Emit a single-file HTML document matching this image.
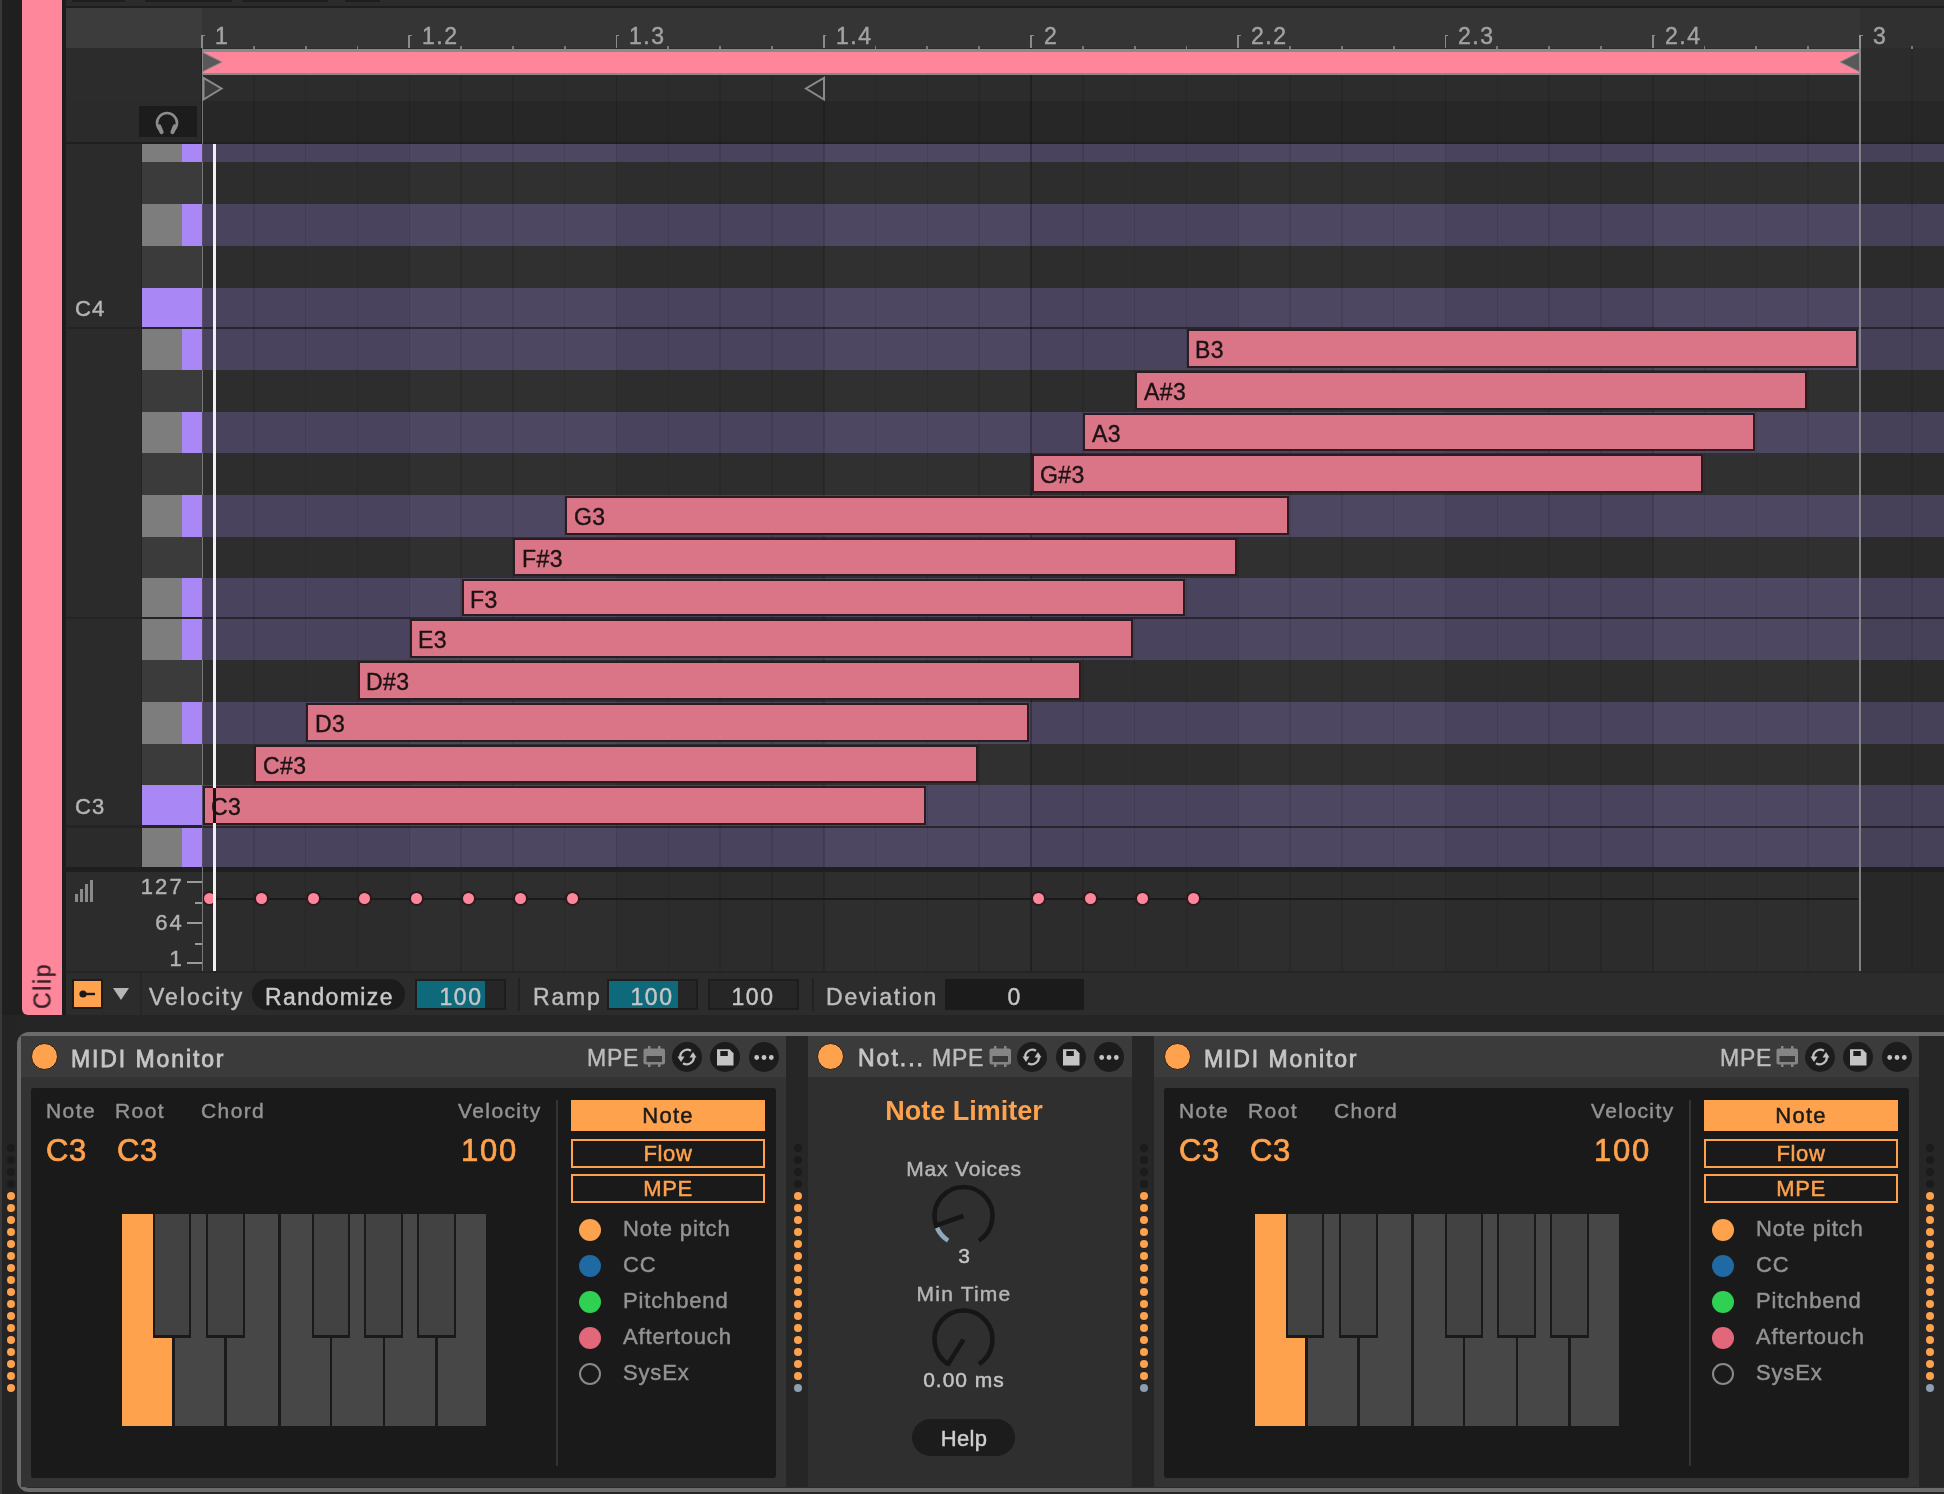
<!DOCTYPE html>
<html><head><meta charset="utf-8"><style>
html,body{margin:0;padding:0;width:1944px;height:1494px;overflow:hidden;background:#222}
body{position:relative;font-family:"Liberation Sans",sans-serif}
body>div,body>svg{position:absolute}
.t{position:absolute;white-space:nowrap;line-height:1;will-change:transform}
.note{position:absolute;box-sizing:border-box;background:#d97586;border:2px solid #2a1c20;overflow:hidden}
.note span{position:absolute;left:6.5px;top:8px;font-size:23px;line-height:1;color:#1c1214;white-space:nowrap;letter-spacing:0.4px;will-change:transform;-webkit-text-stroke:0.4px #1c1214}
</style></head><body>
<div style="left:0.00px;top:0.00px;width:1944.00px;height:1494.00px;background:#222222;"></div>
<div style="left:0.00px;top:0.00px;width:2.00px;height:1494.00px;background:#393939;"></div>
<div style="left:2.00px;top:0.00px;width:20.00px;height:1015.00px;background:#1f1f1f;"></div>
<div style="left:62.00px;top:0.00px;width:4.00px;height:1015.00px;background:#1d1d1d;"></div>
<div style="left:22px;top:0;width:40px;height:1015px;background:#ff879b;border-radius:0 0 0 6px"></div>
<div class="t" style="left:43px;top:985.5px;font-size:23px;color:#3a1f26;-webkit-text-stroke:0.4px #3a1f26;letter-spacing:1.6px;transform:translate(-50%,-50%) rotate(-90deg);white-space:nowrap">Clip</div>
<div style="left:66.00px;top:0.00px;width:1878.00px;height:1015.00px;background:#2b2b2b;"></div>
<div style="left:66.00px;top:0.00px;width:1878.00px;height:6.00px;background:#2b2b2b;"></div>
<div style="left:72.00px;top:0.00px;width:53.00px;height:2.00px;background:#1e1e1e;"></div>
<div style="left:145.00px;top:0.00px;width:87.00px;height:2.00px;background:#1e1e1e;"></div>
<div style="left:242.00px;top:0.00px;width:86.00px;height:2.00px;background:#1e1e1e;"></div>
<div style="left:345.00px;top:0.00px;width:35.00px;height:2.00px;background:#1e1e1e;"></div>
<div style="left:66.00px;top:6.00px;width:1878.00px;height:2.00px;background:#1d1d1d;"></div>
<div style="left:66.00px;top:8.00px;width:136.00px;height:40.00px;background:#3c3c3c;"></div>
<div style="left:202.00px;top:8.00px;width:1658.00px;height:40.00px;background:#353535;"></div>
<div style="left:1860.00px;top:8.00px;width:84.00px;height:40.00px;background:#303030;"></div>
<div style="left:66.00px;top:48.00px;width:1878.00px;height:53.00px;background:#2c2c2c;"></div>
<div style="left:202.00px;top:101.00px;width:1742.00px;height:41.00px;background:#272727;"></div>
<div style="left:66.00px;top:142.00px;width:1878.00px;height:2.00px;background:#1f1f1f;"></div>
<div style="left:202.00px;top:144.00px;width:1742.00px;height:18.00px;background:#4e4762;"></div>
<div style="left:202.00px;top:162.00px;width:1742.00px;height:42.00px;background:#303030;"></div>
<div style="left:202.00px;top:204.00px;width:1742.00px;height:42.00px;background:#4e4762;"></div>
<div style="left:202.00px;top:246.00px;width:1742.00px;height:42.00px;background:#303030;"></div>
<div style="left:202.00px;top:288.00px;width:1742.00px;height:40.00px;background:#4e4762;"></div>
<div style="left:202.00px;top:328.00px;width:1742.00px;height:42.00px;background:#4e4762;"></div>
<div style="left:202.00px;top:370.00px;width:1742.00px;height:41.50px;background:#303030;"></div>
<div style="left:202.00px;top:411.50px;width:1742.00px;height:41.50px;background:#4e4762;"></div>
<div style="left:202.00px;top:453.00px;width:1742.00px;height:41.50px;background:#303030;"></div>
<div style="left:202.00px;top:494.50px;width:1742.00px;height:42.00px;background:#4e4762;"></div>
<div style="left:202.00px;top:536.50px;width:1742.00px;height:41.00px;background:#303030;"></div>
<div style="left:202.00px;top:577.50px;width:1742.00px;height:40.50px;background:#4e4762;"></div>
<div style="left:202.00px;top:618.00px;width:1742.00px;height:42.00px;background:#4e4762;"></div>
<div style="left:202.00px;top:660.00px;width:1742.00px;height:42.00px;background:#303030;"></div>
<div style="left:202.00px;top:702.00px;width:1742.00px;height:41.50px;background:#4e4762;"></div>
<div style="left:202.00px;top:743.50px;width:1742.00px;height:41.50px;background:#303030;"></div>
<div style="left:202.00px;top:785.00px;width:1742.00px;height:41.50px;background:#4e4762;"></div>
<div style="left:202.00px;top:826.50px;width:1742.00px;height:40.50px;background:#4e4762;"></div>
<div style="left:202.00px;top:327.00px;width:1742.00px;height:2.00px;background:#2b2731;"></div>
<div style="left:202.00px;top:617.00px;width:1742.00px;height:2.00px;background:#2b2731;"></div>
<div style="left:202.00px;top:825.50px;width:1742.00px;height:2.00px;background:#2b2731;"></div>
<div style="left:201.25px;top:48.00px;width:1.50px;height:27.00px;background:rgba(0,0,0,0.26);"></div>
<div style="left:253.06px;top:48.00px;width:1.50px;height:27.00px;background:rgba(0,0,0,0.09);"></div>
<div style="left:304.88px;top:48.00px;width:1.50px;height:27.00px;background:rgba(0,0,0,0.09);"></div>
<div style="left:356.69px;top:48.00px;width:1.50px;height:27.00px;background:rgba(0,0,0,0.09);"></div>
<div style="left:408.50px;top:48.00px;width:1.50px;height:27.00px;background:rgba(0,0,0,0.13);"></div>
<div style="left:460.31px;top:48.00px;width:1.50px;height:27.00px;background:rgba(0,0,0,0.09);"></div>
<div style="left:512.12px;top:48.00px;width:1.50px;height:27.00px;background:rgba(0,0,0,0.09);"></div>
<div style="left:563.94px;top:48.00px;width:1.50px;height:27.00px;background:rgba(0,0,0,0.09);"></div>
<div style="left:615.75px;top:48.00px;width:1.50px;height:27.00px;background:rgba(0,0,0,0.13);"></div>
<div style="left:667.56px;top:48.00px;width:1.50px;height:27.00px;background:rgba(0,0,0,0.09);"></div>
<div style="left:719.38px;top:48.00px;width:1.50px;height:27.00px;background:rgba(0,0,0,0.09);"></div>
<div style="left:771.19px;top:48.00px;width:1.50px;height:27.00px;background:rgba(0,0,0,0.09);"></div>
<div style="left:823.00px;top:48.00px;width:1.50px;height:27.00px;background:rgba(0,0,0,0.13);"></div>
<div style="left:874.81px;top:48.00px;width:1.50px;height:27.00px;background:rgba(0,0,0,0.09);"></div>
<div style="left:926.62px;top:48.00px;width:1.50px;height:27.00px;background:rgba(0,0,0,0.09);"></div>
<div style="left:978.44px;top:48.00px;width:1.50px;height:27.00px;background:rgba(0,0,0,0.09);"></div>
<div style="left:1030.25px;top:48.00px;width:1.50px;height:27.00px;background:rgba(0,0,0,0.26);"></div>
<div style="left:1082.06px;top:48.00px;width:1.50px;height:27.00px;background:rgba(0,0,0,0.09);"></div>
<div style="left:1133.88px;top:48.00px;width:1.50px;height:27.00px;background:rgba(0,0,0,0.09);"></div>
<div style="left:1185.69px;top:48.00px;width:1.50px;height:27.00px;background:rgba(0,0,0,0.09);"></div>
<div style="left:1237.50px;top:48.00px;width:1.50px;height:27.00px;background:rgba(0,0,0,0.13);"></div>
<div style="left:1289.31px;top:48.00px;width:1.50px;height:27.00px;background:rgba(0,0,0,0.09);"></div>
<div style="left:1341.12px;top:48.00px;width:1.50px;height:27.00px;background:rgba(0,0,0,0.09);"></div>
<div style="left:1392.94px;top:48.00px;width:1.50px;height:27.00px;background:rgba(0,0,0,0.09);"></div>
<div style="left:1444.75px;top:48.00px;width:1.50px;height:27.00px;background:rgba(0,0,0,0.13);"></div>
<div style="left:1496.56px;top:48.00px;width:1.50px;height:27.00px;background:rgba(0,0,0,0.09);"></div>
<div style="left:1548.38px;top:48.00px;width:1.50px;height:27.00px;background:rgba(0,0,0,0.09);"></div>
<div style="left:1600.19px;top:48.00px;width:1.50px;height:27.00px;background:rgba(0,0,0,0.09);"></div>
<div style="left:1652.00px;top:48.00px;width:1.50px;height:27.00px;background:rgba(0,0,0,0.13);"></div>
<div style="left:1703.81px;top:48.00px;width:1.50px;height:27.00px;background:rgba(0,0,0,0.09);"></div>
<div style="left:1755.62px;top:48.00px;width:1.50px;height:27.00px;background:rgba(0,0,0,0.09);"></div>
<div style="left:1807.44px;top:48.00px;width:1.50px;height:27.00px;background:rgba(0,0,0,0.09);"></div>
<div style="left:1859.25px;top:48.00px;width:1.50px;height:27.00px;background:rgba(0,0,0,0.26);"></div>
<div style="left:1911.06px;top:48.00px;width:1.50px;height:27.00px;background:rgba(0,0,0,0.09);"></div>
<div style="left:201.25px;top:75.00px;width:1.50px;height:792.00px;background:rgba(0,0,0,0.26);"></div>
<div style="left:253.06px;top:75.00px;width:1.50px;height:792.00px;background:rgba(0,0,0,0.09);"></div>
<div style="left:304.88px;top:75.00px;width:1.50px;height:792.00px;background:rgba(0,0,0,0.09);"></div>
<div style="left:356.69px;top:75.00px;width:1.50px;height:792.00px;background:rgba(0,0,0,0.09);"></div>
<div style="left:408.50px;top:75.00px;width:1.50px;height:792.00px;background:rgba(0,0,0,0.13);"></div>
<div style="left:460.31px;top:75.00px;width:1.50px;height:792.00px;background:rgba(0,0,0,0.09);"></div>
<div style="left:512.12px;top:75.00px;width:1.50px;height:792.00px;background:rgba(0,0,0,0.09);"></div>
<div style="left:563.94px;top:75.00px;width:1.50px;height:792.00px;background:rgba(0,0,0,0.09);"></div>
<div style="left:615.75px;top:75.00px;width:1.50px;height:792.00px;background:rgba(0,0,0,0.13);"></div>
<div style="left:667.56px;top:75.00px;width:1.50px;height:792.00px;background:rgba(0,0,0,0.09);"></div>
<div style="left:719.38px;top:75.00px;width:1.50px;height:792.00px;background:rgba(0,0,0,0.09);"></div>
<div style="left:771.19px;top:75.00px;width:1.50px;height:792.00px;background:rgba(0,0,0,0.09);"></div>
<div style="left:823.00px;top:75.00px;width:1.50px;height:792.00px;background:rgba(0,0,0,0.13);"></div>
<div style="left:874.81px;top:75.00px;width:1.50px;height:792.00px;background:rgba(0,0,0,0.09);"></div>
<div style="left:926.62px;top:75.00px;width:1.50px;height:792.00px;background:rgba(0,0,0,0.09);"></div>
<div style="left:978.44px;top:75.00px;width:1.50px;height:792.00px;background:rgba(0,0,0,0.09);"></div>
<div style="left:1030.25px;top:75.00px;width:1.50px;height:792.00px;background:rgba(0,0,0,0.26);"></div>
<div style="left:1082.06px;top:75.00px;width:1.50px;height:792.00px;background:rgba(0,0,0,0.09);"></div>
<div style="left:1133.88px;top:75.00px;width:1.50px;height:792.00px;background:rgba(0,0,0,0.09);"></div>
<div style="left:1185.69px;top:75.00px;width:1.50px;height:792.00px;background:rgba(0,0,0,0.09);"></div>
<div style="left:1237.50px;top:75.00px;width:1.50px;height:792.00px;background:rgba(0,0,0,0.13);"></div>
<div style="left:1289.31px;top:75.00px;width:1.50px;height:792.00px;background:rgba(0,0,0,0.09);"></div>
<div style="left:1341.12px;top:75.00px;width:1.50px;height:792.00px;background:rgba(0,0,0,0.09);"></div>
<div style="left:1392.94px;top:75.00px;width:1.50px;height:792.00px;background:rgba(0,0,0,0.09);"></div>
<div style="left:1444.75px;top:75.00px;width:1.50px;height:792.00px;background:rgba(0,0,0,0.13);"></div>
<div style="left:1496.56px;top:75.00px;width:1.50px;height:792.00px;background:rgba(0,0,0,0.09);"></div>
<div style="left:1548.38px;top:75.00px;width:1.50px;height:792.00px;background:rgba(0,0,0,0.09);"></div>
<div style="left:1600.19px;top:75.00px;width:1.50px;height:792.00px;background:rgba(0,0,0,0.09);"></div>
<div style="left:1652.00px;top:75.00px;width:1.50px;height:792.00px;background:rgba(0,0,0,0.13);"></div>
<div style="left:1703.81px;top:75.00px;width:1.50px;height:792.00px;background:rgba(0,0,0,0.09);"></div>
<div style="left:1755.62px;top:75.00px;width:1.50px;height:792.00px;background:rgba(0,0,0,0.09);"></div>
<div style="left:1807.44px;top:75.00px;width:1.50px;height:792.00px;background:rgba(0,0,0,0.09);"></div>
<div style="left:1859.25px;top:75.00px;width:1.50px;height:792.00px;background:rgba(0,0,0,0.26);"></div>
<div style="left:1911.06px;top:75.00px;width:1.50px;height:792.00px;background:rgba(0,0,0,0.09);"></div>
<div style="left:202.00px;top:144.00px;width:207.25px;height:723.00px;background:rgba(0,0,0,0.045);"></div>
<div style="left:616.50px;top:144.00px;width:207.25px;height:723.00px;background:rgba(0,0,0,0.045);"></div>
<div style="left:1031.00px;top:144.00px;width:207.25px;height:723.00px;background:rgba(0,0,0,0.045);"></div>
<div style="left:1445.50px;top:144.00px;width:207.25px;height:723.00px;background:rgba(0,0,0,0.045);"></div>
<div style="left:1860.00px;top:144.00px;width:84.00px;height:723.00px;background:rgba(0,0,0,0.09);"></div>
<div style="left:66.00px;top:144.00px;width:75.00px;height:723.00px;background:#2b2b2b;"></div>
<div style="left:141.00px;top:144.00px;width:1.00px;height:723.00px;background:#242424;"></div>
<div style="left:142.00px;top:144.00px;width:40.00px;height:18.00px;background:#7d7d7d;"></div>
<div style="left:182.00px;top:144.00px;width:20.00px;height:18.00px;background:#a987f5;"></div>
<div style="left:142.00px;top:162.00px;width:60.00px;height:42.00px;background:#3b3b3b;"></div>
<div style="left:142.00px;top:204.00px;width:40.00px;height:42.00px;background:#7d7d7d;"></div>
<div style="left:182.00px;top:204.00px;width:20.00px;height:42.00px;background:#a987f5;"></div>
<div style="left:142.00px;top:246.00px;width:60.00px;height:42.00px;background:#3b3b3b;"></div>
<div style="left:142.00px;top:288.00px;width:60.00px;height:39.00px;background:#a987f5;"></div>
<div style="left:142.00px;top:329.00px;width:40.00px;height:41.00px;background:#7d7d7d;"></div>
<div style="left:182.00px;top:329.00px;width:20.00px;height:41.00px;background:#a987f5;"></div>
<div style="left:142.00px;top:326.50px;width:60.00px;height:2.50px;background:#2a2a2a;"></div>
<div style="left:142.00px;top:370.00px;width:60.00px;height:41.50px;background:#3b3b3b;"></div>
<div style="left:142.00px;top:411.50px;width:40.00px;height:41.50px;background:#7d7d7d;"></div>
<div style="left:182.00px;top:411.50px;width:20.00px;height:41.50px;background:#a987f5;"></div>
<div style="left:142.00px;top:453.00px;width:60.00px;height:41.50px;background:#3b3b3b;"></div>
<div style="left:142.00px;top:494.50px;width:40.00px;height:42.00px;background:#7d7d7d;"></div>
<div style="left:182.00px;top:494.50px;width:20.00px;height:42.00px;background:#a987f5;"></div>
<div style="left:142.00px;top:536.50px;width:60.00px;height:41.00px;background:#3b3b3b;"></div>
<div style="left:142.00px;top:577.50px;width:40.00px;height:39.50px;background:#7d7d7d;"></div>
<div style="left:182.00px;top:577.50px;width:20.00px;height:39.50px;background:#a987f5;"></div>
<div style="left:142.00px;top:619.00px;width:40.00px;height:41.00px;background:#7d7d7d;"></div>
<div style="left:182.00px;top:619.00px;width:20.00px;height:41.00px;background:#a987f5;"></div>
<div style="left:142.00px;top:616.50px;width:60.00px;height:2.50px;background:#2a2a2a;"></div>
<div style="left:142.00px;top:660.00px;width:60.00px;height:42.00px;background:#3b3b3b;"></div>
<div style="left:142.00px;top:702.00px;width:40.00px;height:41.50px;background:#7d7d7d;"></div>
<div style="left:182.00px;top:702.00px;width:20.00px;height:41.50px;background:#a987f5;"></div>
<div style="left:142.00px;top:743.50px;width:60.00px;height:41.50px;background:#3b3b3b;"></div>
<div style="left:142.00px;top:785.00px;width:60.00px;height:40.50px;background:#a987f5;"></div>
<div style="left:142.00px;top:827.50px;width:40.00px;height:39.50px;background:#7d7d7d;"></div>
<div style="left:182.00px;top:827.50px;width:20.00px;height:39.50px;background:#a987f5;"></div>
<div style="left:142.00px;top:825.00px;width:60.00px;height:2.50px;background:#2a2a2a;"></div>
<div style="left:66.00px;top:326.50px;width:136.00px;height:2.50px;background:#242424;"></div>
<div style="left:66.00px;top:616.50px;width:136.00px;height:2.50px;background:#242424;"></div>
<div style="left:66.00px;top:825.00px;width:136.00px;height:2.50px;background:#242424;"></div>
<div class="t" style="left:75.00px;top:297.60px;font-size:22px;color:#b5b5b5;font-weight:normal;letter-spacing:1px;-webkit-text-stroke:0.45px #b5b5b5;">C4</div>
<div class="t" style="left:75.00px;top:795.60px;font-size:22px;color:#b5b5b5;font-weight:normal;letter-spacing:1px;-webkit-text-stroke:0.45px #b5b5b5;">C3</div>
<div style="left:66.00px;top:867.00px;width:1878.00px;height:5.00px;background:#1f1f1f;"></div>
<div class="note" style="left:202.50px;top:786.00px;width:723.38px;height:38.50px"><span>C3</span></div>
<div class="note" style="left:254.31px;top:744.50px;width:723.38px;height:38.50px"><span>C#3</span></div>
<div class="note" style="left:306.12px;top:703.00px;width:723.38px;height:38.50px"><span>D3</span></div>
<div class="note" style="left:357.94px;top:661.00px;width:723.38px;height:39.00px"><span>D#3</span></div>
<div class="note" style="left:409.75px;top:619.00px;width:723.38px;height:39.00px"><span>E3</span></div>
<div class="note" style="left:461.56px;top:578.50px;width:723.38px;height:37.50px"><span>F3</span></div>
<div class="note" style="left:513.38px;top:537.50px;width:723.38px;height:38.00px"><span>F#3</span></div>
<div class="note" style="left:565.19px;top:495.50px;width:723.38px;height:39.00px"><span>G3</span></div>
<div class="note" style="left:1031.50px;top:454.00px;width:671.56px;height:38.50px"><span>G#3</span></div>
<div class="note" style="left:1083.31px;top:412.50px;width:671.56px;height:38.50px"><span>A3</span></div>
<div class="note" style="left:1135.12px;top:371.00px;width:671.56px;height:38.50px"><span>A#3</span></div>
<div class="note" style="left:1186.94px;top:329.00px;width:671.56px;height:39.00px"><span>B3</span></div>
<div style="left:202px;top:49px;width:1658px;height:26px;background:#8a8a8a"></div>
<div style="left:202px;top:51.5px;width:1658px;height:21px;background:#ff869a"></div>
<svg style="left:202px;top:50px" width="24" height="24"><polygon points="0,2 20,12 0,22" fill="#595959" stroke="#8a8a8a" stroke-width="1"/></svg>
<svg style="left:1838px;top:50px" width="24" height="24"><polygon points="22,2 2,12 22,22" fill="#595959" stroke="#8a8a8a" stroke-width="1"/></svg>
<svg style="left:201px;top:76px" width="26" height="26"><polygon points="2.5,1.8 20.5,12.5 2.5,23.5" fill="#3c3c3c" stroke="#8a8a8a" stroke-width="2"/></svg>
<svg style="left:802px;top:76px" width="26" height="26"><polygon points="22,1.8 4,12.5 22,23.5" fill="none" stroke="#8a8a8a" stroke-width="2"/></svg>
<div style="left:201.10px;top:35.00px;width:1.80px;height:13.00px;background:#8a8a8a;"></div>
<div style="left:201.10px;top:34.50px;width:3.50px;height:1.80px;background:#8a8a8a;"></div>
<div class="t" style="left:214.50px;top:25.30px;font-size:23px;color:#a2a2a2;font-weight:normal;letter-spacing:1.5px;-webkit-text-stroke:0.45px #a2a2a2;">1</div>
<div style="left:252.91px;top:45.50px;width:1.80px;height:3.00px;background:#7a7a7a;"></div>
<div style="left:304.73px;top:45.50px;width:1.80px;height:3.00px;background:#7a7a7a;"></div>
<div style="left:356.54px;top:45.50px;width:1.80px;height:3.00px;background:#7a7a7a;"></div>
<div style="left:408.35px;top:35.00px;width:1.80px;height:13.00px;background:#8a8a8a;"></div>
<div style="left:408.35px;top:34.50px;width:3.50px;height:1.80px;background:#8a8a8a;"></div>
<div class="t" style="left:421.75px;top:25.30px;font-size:23px;color:#a2a2a2;font-weight:normal;letter-spacing:1.5px;-webkit-text-stroke:0.45px #a2a2a2;">1.2</div>
<div style="left:460.16px;top:45.50px;width:1.80px;height:3.00px;background:#7a7a7a;"></div>
<div style="left:511.98px;top:45.50px;width:1.80px;height:3.00px;background:#7a7a7a;"></div>
<div style="left:563.79px;top:45.50px;width:1.80px;height:3.00px;background:#7a7a7a;"></div>
<div style="left:615.60px;top:35.00px;width:1.80px;height:13.00px;background:#8a8a8a;"></div>
<div style="left:615.60px;top:34.50px;width:3.50px;height:1.80px;background:#8a8a8a;"></div>
<div class="t" style="left:629.00px;top:25.30px;font-size:23px;color:#a2a2a2;font-weight:normal;letter-spacing:1.5px;-webkit-text-stroke:0.45px #a2a2a2;">1.3</div>
<div style="left:667.41px;top:45.50px;width:1.80px;height:3.00px;background:#7a7a7a;"></div>
<div style="left:719.23px;top:45.50px;width:1.80px;height:3.00px;background:#7a7a7a;"></div>
<div style="left:771.04px;top:45.50px;width:1.80px;height:3.00px;background:#7a7a7a;"></div>
<div style="left:822.85px;top:35.00px;width:1.80px;height:13.00px;background:#8a8a8a;"></div>
<div style="left:822.85px;top:34.50px;width:3.50px;height:1.80px;background:#8a8a8a;"></div>
<div class="t" style="left:836.25px;top:25.30px;font-size:23px;color:#a2a2a2;font-weight:normal;letter-spacing:1.5px;-webkit-text-stroke:0.45px #a2a2a2;">1.4</div>
<div style="left:874.66px;top:45.50px;width:1.80px;height:3.00px;background:#7a7a7a;"></div>
<div style="left:926.48px;top:45.50px;width:1.80px;height:3.00px;background:#7a7a7a;"></div>
<div style="left:978.29px;top:45.50px;width:1.80px;height:3.00px;background:#7a7a7a;"></div>
<div style="left:1030.10px;top:35.00px;width:1.80px;height:13.00px;background:#8a8a8a;"></div>
<div style="left:1030.10px;top:34.50px;width:3.50px;height:1.80px;background:#8a8a8a;"></div>
<div class="t" style="left:1043.50px;top:25.30px;font-size:23px;color:#a2a2a2;font-weight:normal;letter-spacing:1.5px;-webkit-text-stroke:0.45px #a2a2a2;">2</div>
<div style="left:1081.91px;top:45.50px;width:1.80px;height:3.00px;background:#7a7a7a;"></div>
<div style="left:1133.72px;top:45.50px;width:1.80px;height:3.00px;background:#7a7a7a;"></div>
<div style="left:1185.54px;top:45.50px;width:1.80px;height:3.00px;background:#7a7a7a;"></div>
<div style="left:1237.35px;top:35.00px;width:1.80px;height:13.00px;background:#8a8a8a;"></div>
<div style="left:1237.35px;top:34.50px;width:3.50px;height:1.80px;background:#8a8a8a;"></div>
<div class="t" style="left:1250.75px;top:25.30px;font-size:23px;color:#a2a2a2;font-weight:normal;letter-spacing:1.5px;-webkit-text-stroke:0.45px #a2a2a2;">2.2</div>
<div style="left:1289.16px;top:45.50px;width:1.80px;height:3.00px;background:#7a7a7a;"></div>
<div style="left:1340.97px;top:45.50px;width:1.80px;height:3.00px;background:#7a7a7a;"></div>
<div style="left:1392.79px;top:45.50px;width:1.80px;height:3.00px;background:#7a7a7a;"></div>
<div style="left:1444.60px;top:35.00px;width:1.80px;height:13.00px;background:#8a8a8a;"></div>
<div style="left:1444.60px;top:34.50px;width:3.50px;height:1.80px;background:#8a8a8a;"></div>
<div class="t" style="left:1458.00px;top:25.30px;font-size:23px;color:#a2a2a2;font-weight:normal;letter-spacing:1.5px;-webkit-text-stroke:0.45px #a2a2a2;">2.3</div>
<div style="left:1496.41px;top:45.50px;width:1.80px;height:3.00px;background:#7a7a7a;"></div>
<div style="left:1548.22px;top:45.50px;width:1.80px;height:3.00px;background:#7a7a7a;"></div>
<div style="left:1600.04px;top:45.50px;width:1.80px;height:3.00px;background:#7a7a7a;"></div>
<div style="left:1651.85px;top:35.00px;width:1.80px;height:13.00px;background:#8a8a8a;"></div>
<div style="left:1651.85px;top:34.50px;width:3.50px;height:1.80px;background:#8a8a8a;"></div>
<div class="t" style="left:1665.25px;top:25.30px;font-size:23px;color:#a2a2a2;font-weight:normal;letter-spacing:1.5px;-webkit-text-stroke:0.45px #a2a2a2;">2.4</div>
<div style="left:1703.66px;top:45.50px;width:1.80px;height:3.00px;background:#7a7a7a;"></div>
<div style="left:1755.47px;top:45.50px;width:1.80px;height:3.00px;background:#7a7a7a;"></div>
<div style="left:1807.29px;top:45.50px;width:1.80px;height:3.00px;background:#7a7a7a;"></div>
<div style="left:1859.10px;top:35.00px;width:1.80px;height:13.00px;background:#8a8a8a;"></div>
<div style="left:1859.10px;top:34.50px;width:3.50px;height:1.80px;background:#8a8a8a;"></div>
<div class="t" style="left:1872.50px;top:25.30px;font-size:23px;color:#a2a2a2;font-weight:normal;letter-spacing:1.5px;-webkit-text-stroke:0.45px #a2a2a2;">3</div>
<div style="left:1910.91px;top:45.50px;width:1.80px;height:3.00px;background:#7a7a7a;"></div>
<div style="left:139px;top:106px;width:58px;height:31px;background:#1c1c1c"></div>
<svg style="left:150px;top:103.5px" width="34" height="32"><path d="M11,27 A10,10 0 1 1 23,27" fill="none" stroke="#8c8c8c" stroke-width="2.6"/><path d="M9.2,22.5 L11.5,28" stroke="#8c8c8c" stroke-width="4.2" stroke-linecap="round"/><path d="M24.8,22.5 L22.5,28" stroke="#8c8c8c" stroke-width="4.2" stroke-linecap="round"/></svg>
<div style="left:66.00px;top:872.00px;width:1878.00px;height:99.00px;background:#2e2e2e;"></div>
<div style="left:201.25px;top:872.00px;width:1.50px;height:99.00px;background:rgba(0,0,0,0.26);"></div>
<div style="left:253.06px;top:872.00px;width:1.50px;height:99.00px;background:rgba(0,0,0,0.09);"></div>
<div style="left:304.88px;top:872.00px;width:1.50px;height:99.00px;background:rgba(0,0,0,0.09);"></div>
<div style="left:356.69px;top:872.00px;width:1.50px;height:99.00px;background:rgba(0,0,0,0.09);"></div>
<div style="left:408.50px;top:872.00px;width:1.50px;height:99.00px;background:rgba(0,0,0,0.13);"></div>
<div style="left:460.31px;top:872.00px;width:1.50px;height:99.00px;background:rgba(0,0,0,0.09);"></div>
<div style="left:512.12px;top:872.00px;width:1.50px;height:99.00px;background:rgba(0,0,0,0.09);"></div>
<div style="left:563.94px;top:872.00px;width:1.50px;height:99.00px;background:rgba(0,0,0,0.09);"></div>
<div style="left:615.75px;top:872.00px;width:1.50px;height:99.00px;background:rgba(0,0,0,0.13);"></div>
<div style="left:667.56px;top:872.00px;width:1.50px;height:99.00px;background:rgba(0,0,0,0.09);"></div>
<div style="left:719.38px;top:872.00px;width:1.50px;height:99.00px;background:rgba(0,0,0,0.09);"></div>
<div style="left:771.19px;top:872.00px;width:1.50px;height:99.00px;background:rgba(0,0,0,0.09);"></div>
<div style="left:823.00px;top:872.00px;width:1.50px;height:99.00px;background:rgba(0,0,0,0.13);"></div>
<div style="left:874.81px;top:872.00px;width:1.50px;height:99.00px;background:rgba(0,0,0,0.09);"></div>
<div style="left:926.62px;top:872.00px;width:1.50px;height:99.00px;background:rgba(0,0,0,0.09);"></div>
<div style="left:978.44px;top:872.00px;width:1.50px;height:99.00px;background:rgba(0,0,0,0.09);"></div>
<div style="left:1030.25px;top:872.00px;width:1.50px;height:99.00px;background:rgba(0,0,0,0.26);"></div>
<div style="left:1082.06px;top:872.00px;width:1.50px;height:99.00px;background:rgba(0,0,0,0.09);"></div>
<div style="left:1133.88px;top:872.00px;width:1.50px;height:99.00px;background:rgba(0,0,0,0.09);"></div>
<div style="left:1185.69px;top:872.00px;width:1.50px;height:99.00px;background:rgba(0,0,0,0.09);"></div>
<div style="left:1237.50px;top:872.00px;width:1.50px;height:99.00px;background:rgba(0,0,0,0.13);"></div>
<div style="left:1289.31px;top:872.00px;width:1.50px;height:99.00px;background:rgba(0,0,0,0.09);"></div>
<div style="left:1341.12px;top:872.00px;width:1.50px;height:99.00px;background:rgba(0,0,0,0.09);"></div>
<div style="left:1392.94px;top:872.00px;width:1.50px;height:99.00px;background:rgba(0,0,0,0.09);"></div>
<div style="left:1444.75px;top:872.00px;width:1.50px;height:99.00px;background:rgba(0,0,0,0.13);"></div>
<div style="left:1496.56px;top:872.00px;width:1.50px;height:99.00px;background:rgba(0,0,0,0.09);"></div>
<div style="left:1548.38px;top:872.00px;width:1.50px;height:99.00px;background:rgba(0,0,0,0.09);"></div>
<div style="left:1600.19px;top:872.00px;width:1.50px;height:99.00px;background:rgba(0,0,0,0.09);"></div>
<div style="left:1652.00px;top:872.00px;width:1.50px;height:99.00px;background:rgba(0,0,0,0.13);"></div>
<div style="left:1703.81px;top:872.00px;width:1.50px;height:99.00px;background:rgba(0,0,0,0.09);"></div>
<div style="left:1755.62px;top:872.00px;width:1.50px;height:99.00px;background:rgba(0,0,0,0.09);"></div>
<div style="left:1807.44px;top:872.00px;width:1.50px;height:99.00px;background:rgba(0,0,0,0.09);"></div>
<div style="left:1859.25px;top:872.00px;width:1.50px;height:99.00px;background:rgba(0,0,0,0.26);"></div>
<div style="left:1911.06px;top:872.00px;width:1.50px;height:99.00px;background:rgba(0,0,0,0.09);"></div>
<div style="left:66.00px;top:872.00px;width:136.00px;height:99.00px;background:#2c2c2c;"></div>
<div style="left:1860.00px;top:872.00px;width:84.00px;height:99.00px;background:rgba(0,0,0,0.12);"></div>
<div style="left:202.00px;top:872.00px;width:207.25px;height:99.00px;background:rgba(0,0,0,0.045);"></div>
<div style="left:616.50px;top:872.00px;width:207.25px;height:99.00px;background:rgba(0,0,0,0.045);"></div>
<div style="left:1031.00px;top:872.00px;width:207.25px;height:99.00px;background:rgba(0,0,0,0.045);"></div>
<div style="left:1445.50px;top:872.00px;width:207.25px;height:99.00px;background:rgba(0,0,0,0.045);"></div>
<div class="t" style="left:184.00px;top:876.30px;font-size:22px;color:#b2b2b2;font-weight:normal;letter-spacing:2.2px;-webkit-text-stroke:0.45px #b2b2b2;transform:translateX(-100%);">127</div>
<div class="t" style="left:183.50px;top:911.80px;font-size:22px;color:#b2b2b2;font-weight:normal;letter-spacing:2.2px;-webkit-text-stroke:0.45px #b2b2b2;transform:translateX(-100%);">64</div>
<div class="t" style="left:183.50px;top:948.00px;font-size:22px;color:#b2b2b2;font-weight:normal;letter-spacing:2.2px;-webkit-text-stroke:0.45px #b2b2b2;transform:translateX(-100%);">1</div>
<div style="left:187.00px;top:881.00px;width:15.00px;height:2.00px;background:#9a9a9a;"></div>
<div style="left:195.00px;top:902.00px;width:7.00px;height:2.00px;background:#9a9a9a;"></div>
<div style="left:187.00px;top:921.50px;width:15.00px;height:2.00px;background:#9a9a9a;"></div>
<div style="left:195.00px;top:943.00px;width:7.00px;height:2.00px;background:#9a9a9a;"></div>
<div style="left:187.00px;top:961.50px;width:15.00px;height:2.00px;background:#9a9a9a;"></div>
<div style="left:75.00px;top:894.00px;width:2.50px;height:8.00px;background:#8a8a8a;"></div>
<div style="left:80.00px;top:889.00px;width:2.50px;height:13.00px;background:#8a8a8a;"></div>
<div style="left:85.00px;top:884.00px;width:2.50px;height:18.00px;background:#8a8a8a;"></div>
<div style="left:90.00px;top:880.00px;width:2.50px;height:22.00px;background:#8a8a8a;"></div>
<div style="left:210.00px;top:897.50px;width:1648.00px;height:2.00px;background:#1a1a1a;"></div>
<div style="left:202.00px;top:891px;width:11px;height:11px;border-radius:50%;background:#ff869a;border:2px solid #2a1a1e"></div>
<div style="left:253.81px;top:891px;width:11px;height:11px;border-radius:50%;background:#ff869a;border:2px solid #2a1a1e"></div>
<div style="left:305.62px;top:891px;width:11px;height:11px;border-radius:50%;background:#ff869a;border:2px solid #2a1a1e"></div>
<div style="left:357.44px;top:891px;width:11px;height:11px;border-radius:50%;background:#ff869a;border:2px solid #2a1a1e"></div>
<div style="left:409.25px;top:891px;width:11px;height:11px;border-radius:50%;background:#ff869a;border:2px solid #2a1a1e"></div>
<div style="left:461.06px;top:891px;width:11px;height:11px;border-radius:50%;background:#ff869a;border:2px solid #2a1a1e"></div>
<div style="left:512.88px;top:891px;width:11px;height:11px;border-radius:50%;background:#ff869a;border:2px solid #2a1a1e"></div>
<div style="left:564.69px;top:891px;width:11px;height:11px;border-radius:50%;background:#ff869a;border:2px solid #2a1a1e"></div>
<div style="left:1031.00px;top:891px;width:11px;height:11px;border-radius:50%;background:#ff869a;border:2px solid #2a1a1e"></div>
<div style="left:1082.81px;top:891px;width:11px;height:11px;border-radius:50%;background:#ff869a;border:2px solid #2a1a1e"></div>
<div style="left:1134.62px;top:891px;width:11px;height:11px;border-radius:50%;background:#ff869a;border:2px solid #2a1a1e"></div>
<div style="left:1186.44px;top:891px;width:11px;height:11px;border-radius:50%;background:#ff869a;border:2px solid #2a1a1e"></div>
<div style="left:201.60px;top:35.00px;width:1.80px;height:109.00px;background:rgba(140,140,140,0.8);"></div>
<div style="left:201.60px;top:144.00px;width:1.80px;height:18.00px;background:rgba(120,110,140,0.45);"></div>
<div style="left:201.60px;top:162.00px;width:1.80px;height:42.00px;background:rgba(140,140,140,0.8);"></div>
<div style="left:201.60px;top:204.00px;width:1.80px;height:42.00px;background:rgba(120,110,140,0.45);"></div>
<div style="left:201.60px;top:246.00px;width:1.80px;height:42.00px;background:rgba(140,140,140,0.8);"></div>
<div style="left:201.60px;top:288.00px;width:1.80px;height:40.00px;background:rgba(120,110,140,0.45);"></div>
<div style="left:201.60px;top:328.00px;width:1.80px;height:42.00px;background:rgba(120,110,140,0.45);"></div>
<div style="left:201.60px;top:370.00px;width:1.80px;height:41.50px;background:rgba(140,140,140,0.8);"></div>
<div style="left:201.60px;top:411.50px;width:1.80px;height:41.50px;background:rgba(120,110,140,0.45);"></div>
<div style="left:201.60px;top:453.00px;width:1.80px;height:41.50px;background:rgba(140,140,140,0.8);"></div>
<div style="left:201.60px;top:494.50px;width:1.80px;height:42.00px;background:rgba(120,110,140,0.45);"></div>
<div style="left:201.60px;top:536.50px;width:1.80px;height:41.00px;background:rgba(140,140,140,0.8);"></div>
<div style="left:201.60px;top:577.50px;width:1.80px;height:40.50px;background:rgba(120,110,140,0.45);"></div>
<div style="left:201.60px;top:618.00px;width:1.80px;height:42.00px;background:rgba(120,110,140,0.45);"></div>
<div style="left:201.60px;top:660.00px;width:1.80px;height:42.00px;background:rgba(140,140,140,0.8);"></div>
<div style="left:201.60px;top:702.00px;width:1.80px;height:41.50px;background:rgba(120,110,140,0.45);"></div>
<div style="left:201.60px;top:743.50px;width:1.80px;height:41.50px;background:rgba(140,140,140,0.8);"></div>
<div style="left:201.60px;top:785.00px;width:1.80px;height:41.50px;background:rgba(120,110,140,0.45);"></div>
<div style="left:201.60px;top:826.50px;width:1.80px;height:40.50px;background:rgba(120,110,140,0.45);"></div>
<div style="left:201.60px;top:867.00px;width:1.80px;height:104.00px;background:rgba(140,140,140,0.8);"></div>
<div style="left:1859.10px;top:35.00px;width:1.80px;height:936.00px;background:rgba(145,145,150,0.85);"></div>
<div style="left:213.20px;top:144.00px;width:2.60px;height:827.00px;background:#f0f0f0;"></div>
<div style="left:213.20px;top:788.00px;width:2.60px;height:35.00px;background:#151515;"></div>
<div style="left:66.00px;top:971.00px;width:1878.00px;height:44.00px;background:#2c2c2c;"></div>
<div style="left:66.00px;top:971.00px;width:1878.00px;height:1.50px;background:#252525;"></div>
<div style="left:72px;top:979px;width:31px;height:30px;background:#1e1e1e"></div>
<div style="left:74px;top:981px;width:27px;height:26px;background:#ffa24d"></div>
<svg style="left:74px;top:981px" width="27" height="26"><circle cx="9" cy="13" r="3.6" fill="#1a1a1a"/><rect x="9" y="11.8" width="12" height="2.4" fill="#1a1a1a"/></svg>
<svg style="left:112px;top:987px" width="18" height="14"><polygon points="1,1 17,1 9,13" fill="#b5b5b5"/></svg>
<div style="left:140.00px;top:973.00px;width:1.50px;height:42.00px;background:#262626;"></div>
<div class="t" style="left:149.00px;top:986.00px;font-size:23px;color:#bcbcbc;font-weight:normal;letter-spacing:2.0px;-webkit-text-stroke:0.45px #bcbcbc;">Velocity</div>
<div style="left:252px;top:979px;width:153px;height:31px;background:#1c1c1c;border-radius:16px"></div>
<div class="t" style="left:265.00px;top:986.00px;font-size:23px;color:#c8c8c8;font-weight:normal;letter-spacing:1.4px;-webkit-text-stroke:0.45px #c8c8c8;">Randomize</div>
<div style="left:415px;top:979px;width:91px;height:31px;background:#1d1d1d"></div>
<div style="left:417px;top:981px;width:87px;height:27px;background:#262626"></div>
<div style="left:417px;top:981px;width:68px;height:27px;background:#0e6a7b"></div>
<div class="t" style="left:460.50px;top:986.00px;font-size:23px;color:#c6c6c6;font-weight:normal;letter-spacing:1.5px;-webkit-text-stroke:0.45px #c6c6c6;transform:translateX(-50%);">100</div>
<div style="left:518.00px;top:978.00px;width:1.50px;height:33.00px;background:#222222;"></div>
<div class="t" style="left:533.00px;top:986.00px;font-size:23px;color:#bcbcbc;font-weight:normal;letter-spacing:1.8px;-webkit-text-stroke:0.45px #bcbcbc;">Ramp</div>
<div style="left:607px;top:979px;width:91px;height:31px;background:#1d1d1d"></div>
<div style="left:609px;top:981px;width:87px;height:27px;background:#262626"></div>
<div style="left:609px;top:981px;width:69px;height:27px;background:#0e6a7b"></div>
<div class="t" style="left:652.30px;top:986.00px;font-size:23px;color:#c6c6c6;font-weight:normal;letter-spacing:1.5px;-webkit-text-stroke:0.45px #c6c6c6;transform:translateX(-50%);">100</div>
<div style="left:708px;top:979px;width:91px;height:31px;background:#1d1d1d"></div>
<div style="left:710px;top:981px;width:87px;height:27px;background:#262626"></div>
<div class="t" style="left:753.30px;top:986.00px;font-size:23px;color:#c6c6c6;font-weight:normal;letter-spacing:1.5px;-webkit-text-stroke:0.45px #c6c6c6;transform:translateX(-50%);">100</div>
<div style="left:812.00px;top:978.00px;width:1.50px;height:33.00px;background:#222222;"></div>
<div class="t" style="left:826.00px;top:986.00px;font-size:23px;color:#bcbcbc;font-weight:normal;letter-spacing:1.8px;-webkit-text-stroke:0.45px #bcbcbc;">Deviation</div>
<div style="left:945px;top:979px;width:139px;height:31px;background:#1b1b1b"></div>
<div class="t" style="left:1014.30px;top:986.00px;font-size:23px;color:#c6c6c6;font-weight:normal;-webkit-text-stroke:0.45px #c6c6c6;transform:translateX(-50%);">0</div>
<div style="left:0.00px;top:1015.00px;width:1944.00px;height:479.00px;background:#252525;"></div>
<div style="left:0.00px;top:1015.00px;width:2.00px;height:479.00px;background:#393939;"></div>
<div style="left:17px;top:1032px;width:1960px;height:460px;border:4px solid #6b6b6b;border-radius:12px;box-sizing:border-box;background:#2a2a2a"></div>
<div style="left:21.00px;top:1036.00px;width:765.00px;height:41.00px;background:#3b3b3b;"></div>
<div style="left:21.00px;top:1077.00px;width:765.00px;height:410.00px;background:#333333;"></div>
<div style="left:30.5px;top:1042.5px;width:25px;height:25px;border-radius:50%;background:#ffa24d;border:1.5px solid #2a1a10"></div>
<div class="t" style="left:71.00px;top:1047.50px;font-size:23px;color:#c6c6c6;font-weight:normal;letter-spacing:1.9px;-webkit-text-stroke:0.8px #c6c6c6;">MIDI Monitor</div>
<div class="t" style="left:587.00px;top:1046.70px;font-size:23px;color:#bcbcbc;font-weight:normal;letter-spacing:0.8px;-webkit-text-stroke:0.45px #bcbcbc;">MPE</div>
<svg style="left:642.5px;top:1045px" width="24" height="24"><rect x="0.5" y="3.5" width="21.5" height="16" rx="2" fill="#858585"/><rect x="3.5" y="11" width="15.5" height="6" fill="#3a3a3a"/><rect x="5" y="1" width="2.5" height="3" fill="#858585"/><rect x="15" y="1" width="2.5" height="3" fill="#858585"/><rect x="5" y="19" width="2.5" height="3" fill="#858585"/><rect x="15" y="19" width="2.5" height="3" fill="#858585"/></svg>
<div style="left:671.7px;top:1041.5px;width:30px;height:30px;border-radius:50%;background:#1c1c1c"></div>
<div style="left:710.2px;top:1041.5px;width:30px;height:30px;border-radius:50%;background:#1c1c1c"></div>
<div style="left:748.7px;top:1041.5px;width:30px;height:30px;border-radius:50%;background:#1c1c1c"></div>
<svg style="left:671.7px;top:1041.5px" width="30" height="30"><path d="M8.5,16.5 A7,7 0 0 1 19,8.8" fill="none" stroke="#c0c0c0" stroke-width="2.3"/><polygon points="5.5,14.5 12.5,14.5 9,20" fill="#c0c0c0"/><path d="M21.5,13.5 A7,7 0 0 1 11,21.2" fill="none" stroke="#c0c0c0" stroke-width="2.3"/><polygon points="24.5,15.5 17.5,15.5 21,10" fill="#c0c0c0"/></svg>
<svg style="left:710.2px;top:1041.5px" width="30" height="30"><path d="M7,7.3 H19.5 L23.5,11.3 V23.5 H7 Z" fill="#c4c4c4"/><rect x="10.3" y="9" width="7.5" height="5" fill="#1c1c1c"/></svg>
<svg style="left:748.7px;top:1041.5px" width="30" height="30"><circle cx="7.7" cy="15.5" r="2.4" fill="#c4c4c4"/><circle cx="15" cy="15.5" r="2.4" fill="#c4c4c4"/><circle cx="22.3" cy="15.5" r="2.4" fill="#c4c4c4"/></svg>
<div style="left:31px;top:1088px;width:745px;height:390px;background:#1b1a1a;border-radius:3px"></div>
<div class="t" style="left:46.00px;top:1099.80px;font-size:21px;color:#939393;font-weight:normal;letter-spacing:1.4px;-webkit-text-stroke:0.45px #939393;">Note</div>
<div class="t" style="left:115.00px;top:1099.80px;font-size:21px;color:#939393;font-weight:normal;letter-spacing:1.4px;-webkit-text-stroke:0.45px #939393;">Root</div>
<div class="t" style="left:201.30px;top:1099.80px;font-size:21px;color:#939393;font-weight:normal;letter-spacing:1.4px;-webkit-text-stroke:0.45px #939393;">Chord</div>
<div class="t" style="left:458.00px;top:1099.80px;font-size:21px;color:#939393;font-weight:normal;letter-spacing:1.4px;-webkit-text-stroke:0.45px #939393;">Velocity</div>
<div class="t" style="left:46.00px;top:1135.20px;font-size:31px;color:#ffa24d;font-weight:normal;letter-spacing:0.5px;-webkit-text-stroke:0.7px #ffa24d;">C3</div>
<div class="t" style="left:116.50px;top:1135.20px;font-size:31px;color:#ffa24d;font-weight:normal;letter-spacing:0.5px;-webkit-text-stroke:0.7px #ffa24d;">C3</div>
<div class="t" style="left:461.00px;top:1135.20px;font-size:31px;color:#ffa24d;font-weight:normal;letter-spacing:1.8px;-webkit-text-stroke:0.7px #ffa24d;">100</div>
<div style="left:122.00px;top:1213.70px;width:364.50px;height:212.80px;background:#1b1a1a;"></div>
<div style="left:122.00px;top:1213.70px;width:50.20px;height:212.80px;background:#ffa24d;"></div>
<div style="left:174.60px;top:1213.70px;width:49.80px;height:212.80px;background:#474747;"></div>
<div style="left:226.80px;top:1213.70px;width:51.50px;height:212.80px;background:#474747;"></div>
<div style="left:280.70px;top:1213.70px;width:49.10px;height:212.80px;background:#474747;"></div>
<div style="left:332.20px;top:1213.70px;width:50.60px;height:212.80px;background:#474747;"></div>
<div style="left:385.20px;top:1213.70px;width:50.10px;height:212.80px;background:#474747;"></div>
<div style="left:437.70px;top:1213.70px;width:48.80px;height:212.80px;background:#474747;"></div>
<div style="left:152.60px;top:1213.70px;width:38.50px;height:124.10px;background:#1b1a1a;"></div>
<div style="left:154.60px;top:1213.70px;width:34.50px;height:121.60px;background:#424242;"></div>
<div style="left:206.40px;top:1213.70px;width:38.50px;height:124.10px;background:#1b1a1a;"></div>
<div style="left:208.40px;top:1213.70px;width:34.50px;height:121.60px;background:#424242;"></div>
<div style="left:311.50px;top:1213.70px;width:38.50px;height:124.10px;background:#1b1a1a;"></div>
<div style="left:313.50px;top:1213.70px;width:34.50px;height:121.60px;background:#424242;"></div>
<div style="left:364.40px;top:1213.70px;width:38.50px;height:124.10px;background:#1b1a1a;"></div>
<div style="left:366.40px;top:1213.70px;width:34.50px;height:121.60px;background:#424242;"></div>
<div style="left:417.20px;top:1213.70px;width:38.50px;height:124.10px;background:#1b1a1a;"></div>
<div style="left:419.20px;top:1213.70px;width:34.50px;height:121.60px;background:#424242;"></div>
<div style="left:556.00px;top:1100.00px;width:2.00px;height:366.00px;background:#333333;"></div>
<div style="left:570.8px;top:1100.2px;width:194px;height:31px;background:#ffa24d"></div>
<div class="t" style="left:667.70px;top:1104.50px;font-size:22px;color:#1b1b1b;font-weight:normal;letter-spacing:1.2px;-webkit-text-stroke:0.5px #1b1b1b;transform:translateX(-50%);">Note</div>
<div style="left:570.8px;top:1138.7px;width:194px;height:29px;border:2.6px solid #ffa24d;box-sizing:border-box"></div>
<div class="t" style="left:667.70px;top:1142.50px;font-size:22px;color:#ffa24d;font-weight:normal;letter-spacing:0.6px;-webkit-text-stroke:0.5px #ffa24d;transform:translateX(-50%);">Flow</div>
<div style="left:570.8px;top:1174.3px;width:194px;height:29px;border:2.6px solid #ffa24d;box-sizing:border-box"></div>
<div class="t" style="left:667.70px;top:1178.00px;font-size:22px;color:#ffa24d;font-weight:normal;letter-spacing:0.6px;-webkit-text-stroke:0.5px #ffa24d;transform:translateX(-50%);">MPE</div>
<div style="left:579.2px;top:1219px;width:22px;height:22px;border-radius:50%;background:#ffa24d"></div>
<div class="t" style="left:623.40px;top:1218.00px;font-size:22px;color:#939393;font-weight:normal;letter-spacing:0.85px;-webkit-text-stroke:0.45px #939393;">Note pitch</div>
<div style="left:579.2px;top:1255px;width:22px;height:22px;border-radius:50%;background:#1f6aa3"></div>
<div class="t" style="left:623.40px;top:1254.00px;font-size:22px;color:#939393;font-weight:normal;letter-spacing:0.85px;-webkit-text-stroke:0.45px #939393;">CC</div>
<div style="left:579.2px;top:1291px;width:22px;height:22px;border-radius:50%;background:#2fd152"></div>
<div class="t" style="left:623.40px;top:1290.00px;font-size:22px;color:#939393;font-weight:normal;letter-spacing:0.85px;-webkit-text-stroke:0.45px #939393;">Pitchbend</div>
<div style="left:579.2px;top:1327px;width:22px;height:22px;border-radius:50%;background:#e2677a"></div>
<div class="t" style="left:623.40px;top:1326.00px;font-size:22px;color:#939393;font-weight:normal;letter-spacing:0.85px;-webkit-text-stroke:0.45px #939393;">Aftertouch</div>
<div style="left:579.2px;top:1363px;width:22px;height:22px;border-radius:50%;border:2.5px solid #8a8a8a;box-sizing:border-box"></div>
<div class="t" style="left:623.40px;top:1362.00px;font-size:22px;color:#939393;font-weight:normal;letter-spacing:0.85px;-webkit-text-stroke:0.45px #939393;">SysEx</div>
<div style="left:1154.00px;top:1036.00px;width:765.00px;height:41.00px;background:#3b3b3b;"></div>
<div style="left:1154.00px;top:1077.00px;width:765.00px;height:410.00px;background:#333333;"></div>
<div style="left:1163.5px;top:1042.5px;width:25px;height:25px;border-radius:50%;background:#ffa24d;border:1.5px solid #2a1a10"></div>
<div class="t" style="left:1204.00px;top:1047.50px;font-size:23px;color:#c6c6c6;font-weight:normal;letter-spacing:1.9px;-webkit-text-stroke:0.8px #c6c6c6;">MIDI Monitor</div>
<div class="t" style="left:1720.00px;top:1046.70px;font-size:23px;color:#bcbcbc;font-weight:normal;letter-spacing:0.8px;-webkit-text-stroke:0.45px #bcbcbc;">MPE</div>
<svg style="left:1775.5px;top:1045px" width="24" height="24"><rect x="0.5" y="3.5" width="21.5" height="16" rx="2" fill="#858585"/><rect x="3.5" y="11" width="15.5" height="6" fill="#3a3a3a"/><rect x="5" y="1" width="2.5" height="3" fill="#858585"/><rect x="15" y="1" width="2.5" height="3" fill="#858585"/><rect x="5" y="19" width="2.5" height="3" fill="#858585"/><rect x="15" y="19" width="2.5" height="3" fill="#858585"/></svg>
<div style="left:1804.7px;top:1041.5px;width:30px;height:30px;border-radius:50%;background:#1c1c1c"></div>
<div style="left:1843.2px;top:1041.5px;width:30px;height:30px;border-radius:50%;background:#1c1c1c"></div>
<div style="left:1881.7px;top:1041.5px;width:30px;height:30px;border-radius:50%;background:#1c1c1c"></div>
<svg style="left:1804.7px;top:1041.5px" width="30" height="30"><path d="M8.5,16.5 A7,7 0 0 1 19,8.8" fill="none" stroke="#c0c0c0" stroke-width="2.3"/><polygon points="5.5,14.5 12.5,14.5 9,20" fill="#c0c0c0"/><path d="M21.5,13.5 A7,7 0 0 1 11,21.2" fill="none" stroke="#c0c0c0" stroke-width="2.3"/><polygon points="24.5,15.5 17.5,15.5 21,10" fill="#c0c0c0"/></svg>
<svg style="left:1843.2px;top:1041.5px" width="30" height="30"><path d="M7,7.3 H19.5 L23.5,11.3 V23.5 H7 Z" fill="#c4c4c4"/><rect x="10.3" y="9" width="7.5" height="5" fill="#1c1c1c"/></svg>
<svg style="left:1881.7px;top:1041.5px" width="30" height="30"><circle cx="7.7" cy="15.5" r="2.4" fill="#c4c4c4"/><circle cx="15" cy="15.5" r="2.4" fill="#c4c4c4"/><circle cx="22.3" cy="15.5" r="2.4" fill="#c4c4c4"/></svg>
<div style="left:1164px;top:1088px;width:745px;height:390px;background:#1b1a1a;border-radius:3px"></div>
<div class="t" style="left:1179.00px;top:1099.80px;font-size:21px;color:#939393;font-weight:normal;letter-spacing:1.4px;-webkit-text-stroke:0.45px #939393;">Note</div>
<div class="t" style="left:1248.00px;top:1099.80px;font-size:21px;color:#939393;font-weight:normal;letter-spacing:1.4px;-webkit-text-stroke:0.45px #939393;">Root</div>
<div class="t" style="left:1334.30px;top:1099.80px;font-size:21px;color:#939393;font-weight:normal;letter-spacing:1.4px;-webkit-text-stroke:0.45px #939393;">Chord</div>
<div class="t" style="left:1591.00px;top:1099.80px;font-size:21px;color:#939393;font-weight:normal;letter-spacing:1.4px;-webkit-text-stroke:0.45px #939393;">Velocity</div>
<div class="t" style="left:1179.00px;top:1135.20px;font-size:31px;color:#ffa24d;font-weight:normal;letter-spacing:0.5px;-webkit-text-stroke:0.7px #ffa24d;">C3</div>
<div class="t" style="left:1249.50px;top:1135.20px;font-size:31px;color:#ffa24d;font-weight:normal;letter-spacing:0.5px;-webkit-text-stroke:0.7px #ffa24d;">C3</div>
<div class="t" style="left:1594.00px;top:1135.20px;font-size:31px;color:#ffa24d;font-weight:normal;letter-spacing:1.8px;-webkit-text-stroke:0.7px #ffa24d;">100</div>
<div style="left:1255.00px;top:1213.70px;width:364.50px;height:212.80px;background:#1b1a1a;"></div>
<div style="left:1255.00px;top:1213.70px;width:50.20px;height:212.80px;background:#ffa24d;"></div>
<div style="left:1307.60px;top:1213.70px;width:49.80px;height:212.80px;background:#474747;"></div>
<div style="left:1359.80px;top:1213.70px;width:51.50px;height:212.80px;background:#474747;"></div>
<div style="left:1413.70px;top:1213.70px;width:49.10px;height:212.80px;background:#474747;"></div>
<div style="left:1465.20px;top:1213.70px;width:50.60px;height:212.80px;background:#474747;"></div>
<div style="left:1518.20px;top:1213.70px;width:50.10px;height:212.80px;background:#474747;"></div>
<div style="left:1570.70px;top:1213.70px;width:48.80px;height:212.80px;background:#474747;"></div>
<div style="left:1285.60px;top:1213.70px;width:38.50px;height:124.10px;background:#1b1a1a;"></div>
<div style="left:1287.60px;top:1213.70px;width:34.50px;height:121.60px;background:#424242;"></div>
<div style="left:1339.40px;top:1213.70px;width:38.50px;height:124.10px;background:#1b1a1a;"></div>
<div style="left:1341.40px;top:1213.70px;width:34.50px;height:121.60px;background:#424242;"></div>
<div style="left:1444.50px;top:1213.70px;width:38.50px;height:124.10px;background:#1b1a1a;"></div>
<div style="left:1446.50px;top:1213.70px;width:34.50px;height:121.60px;background:#424242;"></div>
<div style="left:1497.40px;top:1213.70px;width:38.50px;height:124.10px;background:#1b1a1a;"></div>
<div style="left:1499.40px;top:1213.70px;width:34.50px;height:121.60px;background:#424242;"></div>
<div style="left:1550.20px;top:1213.70px;width:38.50px;height:124.10px;background:#1b1a1a;"></div>
<div style="left:1552.20px;top:1213.70px;width:34.50px;height:121.60px;background:#424242;"></div>
<div style="left:1689.00px;top:1100.00px;width:2.00px;height:366.00px;background:#333333;"></div>
<div style="left:1703.8px;top:1100.2px;width:194px;height:31px;background:#ffa24d"></div>
<div class="t" style="left:1800.70px;top:1104.50px;font-size:22px;color:#1b1b1b;font-weight:normal;letter-spacing:1.2px;-webkit-text-stroke:0.5px #1b1b1b;transform:translateX(-50%);">Note</div>
<div style="left:1703.8px;top:1138.7px;width:194px;height:29px;border:2.6px solid #ffa24d;box-sizing:border-box"></div>
<div class="t" style="left:1800.70px;top:1142.50px;font-size:22px;color:#ffa24d;font-weight:normal;letter-spacing:0.6px;-webkit-text-stroke:0.5px #ffa24d;transform:translateX(-50%);">Flow</div>
<div style="left:1703.8px;top:1174.3px;width:194px;height:29px;border:2.6px solid #ffa24d;box-sizing:border-box"></div>
<div class="t" style="left:1800.70px;top:1178.00px;font-size:22px;color:#ffa24d;font-weight:normal;letter-spacing:0.6px;-webkit-text-stroke:0.5px #ffa24d;transform:translateX(-50%);">MPE</div>
<div style="left:1712.2px;top:1219px;width:22px;height:22px;border-radius:50%;background:#ffa24d"></div>
<div class="t" style="left:1756.40px;top:1218.00px;font-size:22px;color:#939393;font-weight:normal;letter-spacing:0.85px;-webkit-text-stroke:0.45px #939393;">Note pitch</div>
<div style="left:1712.2px;top:1255px;width:22px;height:22px;border-radius:50%;background:#1f6aa3"></div>
<div class="t" style="left:1756.40px;top:1254.00px;font-size:22px;color:#939393;font-weight:normal;letter-spacing:0.85px;-webkit-text-stroke:0.45px #939393;">CC</div>
<div style="left:1712.2px;top:1291px;width:22px;height:22px;border-radius:50%;background:#2fd152"></div>
<div class="t" style="left:1756.40px;top:1290.00px;font-size:22px;color:#939393;font-weight:normal;letter-spacing:0.85px;-webkit-text-stroke:0.45px #939393;">Pitchbend</div>
<div style="left:1712.2px;top:1327px;width:22px;height:22px;border-radius:50%;background:#e2677a"></div>
<div class="t" style="left:1756.40px;top:1326.00px;font-size:22px;color:#939393;font-weight:normal;letter-spacing:0.85px;-webkit-text-stroke:0.45px #939393;">Aftertouch</div>
<div style="left:1712.2px;top:1363px;width:22px;height:22px;border-radius:50%;border:2.5px solid #8a8a8a;box-sizing:border-box"></div>
<div class="t" style="left:1756.40px;top:1362.00px;font-size:22px;color:#939393;font-weight:normal;letter-spacing:0.85px;-webkit-text-stroke:0.45px #939393;">SysEx</div>
<div style="left:2.00px;top:1015.00px;width:15.00px;height:479.00px;background:#242424;"></div>
<div style="left:6.8px;top:1192.0px;width:8px;height:8px;border-radius:50%;background:#ffa24d"></div>
<div style="left:6.8px;top:1204.0px;width:8px;height:8px;border-radius:50%;background:#ffa24d"></div>
<div style="left:6.8px;top:1216.0px;width:8px;height:8px;border-radius:50%;background:#ffa24d"></div>
<div style="left:6.8px;top:1227.9px;width:8px;height:8px;border-radius:50%;background:#ffa24d"></div>
<div style="left:6.8px;top:1239.9px;width:8px;height:8px;border-radius:50%;background:#ffa24d"></div>
<div style="left:6.8px;top:1251.9px;width:8px;height:8px;border-radius:50%;background:#ffa24d"></div>
<div style="left:6.8px;top:1263.9px;width:8px;height:8px;border-radius:50%;background:#ffa24d"></div>
<div style="left:6.8px;top:1275.9px;width:8px;height:8px;border-radius:50%;background:#ffa24d"></div>
<div style="left:6.8px;top:1287.8px;width:8px;height:8px;border-radius:50%;background:#ffa24d"></div>
<div style="left:6.8px;top:1299.8px;width:8px;height:8px;border-radius:50%;background:#ffa24d"></div>
<div style="left:6.8px;top:1311.8px;width:8px;height:8px;border-radius:50%;background:#ffa24d"></div>
<div style="left:6.8px;top:1323.8px;width:8px;height:8px;border-radius:50%;background:#ffa24d"></div>
<div style="left:6.8px;top:1335.8px;width:8px;height:8px;border-radius:50%;background:#ffa24d"></div>
<div style="left:6.8px;top:1347.7px;width:8px;height:8px;border-radius:50%;background:#ffa24d"></div>
<div style="left:6.8px;top:1359.7px;width:8px;height:8px;border-radius:50%;background:#ffa24d"></div>
<div style="left:6.8px;top:1371.7px;width:8px;height:8px;border-radius:50%;background:#ffa24d"></div>
<div style="left:6.8px;top:1383.7px;width:8px;height:8px;border-radius:50%;background:#ffa24d"></div>
<div style="left:6.8px;top:1180.0px;width:8px;height:8px;border-radius:50%;background:#1b1b1b"></div>
<div style="left:6.8px;top:1168.0px;width:8px;height:8px;border-radius:50%;background:#1b1b1b"></div>
<div style="left:6.8px;top:1156.1px;width:8px;height:8px;border-radius:50%;background:#1b1b1b"></div>
<div style="left:6.8px;top:1144.1px;width:8px;height:8px;border-radius:50%;background:#1b1b1b"></div>
<div style="left:786.00px;top:1036.00px;width:22.00px;height:451.00px;background:#262626;"></div>
<div style="left:793.5px;top:1192.0px;width:8px;height:8px;border-radius:50%;background:#ffa24d"></div>
<div style="left:793.5px;top:1204.0px;width:8px;height:8px;border-radius:50%;background:#ffa24d"></div>
<div style="left:793.5px;top:1216.0px;width:8px;height:8px;border-radius:50%;background:#ffa24d"></div>
<div style="left:793.5px;top:1227.9px;width:8px;height:8px;border-radius:50%;background:#ffa24d"></div>
<div style="left:793.5px;top:1239.9px;width:8px;height:8px;border-radius:50%;background:#ffa24d"></div>
<div style="left:793.5px;top:1251.9px;width:8px;height:8px;border-radius:50%;background:#ffa24d"></div>
<div style="left:793.5px;top:1263.9px;width:8px;height:8px;border-radius:50%;background:#ffa24d"></div>
<div style="left:793.5px;top:1275.9px;width:8px;height:8px;border-radius:50%;background:#ffa24d"></div>
<div style="left:793.5px;top:1287.8px;width:8px;height:8px;border-radius:50%;background:#ffa24d"></div>
<div style="left:793.5px;top:1299.8px;width:8px;height:8px;border-radius:50%;background:#ffa24d"></div>
<div style="left:793.5px;top:1311.8px;width:8px;height:8px;border-radius:50%;background:#ffa24d"></div>
<div style="left:793.5px;top:1323.8px;width:8px;height:8px;border-radius:50%;background:#ffa24d"></div>
<div style="left:793.5px;top:1335.8px;width:8px;height:8px;border-radius:50%;background:#ffa24d"></div>
<div style="left:793.5px;top:1347.7px;width:8px;height:8px;border-radius:50%;background:#ffa24d"></div>
<div style="left:793.5px;top:1359.7px;width:8px;height:8px;border-radius:50%;background:#ffa24d"></div>
<div style="left:793.5px;top:1371.7px;width:8px;height:8px;border-radius:50%;background:#ffa24d"></div>
<div style="left:793.5px;top:1180.0px;width:8px;height:8px;border-radius:50%;background:#1b1b1b"></div>
<div style="left:793.5px;top:1168.0px;width:8px;height:8px;border-radius:50%;background:#1b1b1b"></div>
<div style="left:793.5px;top:1156.1px;width:8px;height:8px;border-radius:50%;background:#1b1b1b"></div>
<div style="left:793.5px;top:1144.1px;width:8px;height:8px;border-radius:50%;background:#1b1b1b"></div>
<div style="left:793.5px;top:1383.7px;width:8px;height:8px;border-radius:50%;background:#8c9fae"></div>
<div style="left:1131.50px;top:1036.00px;width:22.50px;height:451.00px;background:#262626;"></div>
<div style="left:1139.5px;top:1192.0px;width:8px;height:8px;border-radius:50%;background:#ffa24d"></div>
<div style="left:1139.5px;top:1204.0px;width:8px;height:8px;border-radius:50%;background:#ffa24d"></div>
<div style="left:1139.5px;top:1216.0px;width:8px;height:8px;border-radius:50%;background:#ffa24d"></div>
<div style="left:1139.5px;top:1227.9px;width:8px;height:8px;border-radius:50%;background:#ffa24d"></div>
<div style="left:1139.5px;top:1239.9px;width:8px;height:8px;border-radius:50%;background:#ffa24d"></div>
<div style="left:1139.5px;top:1251.9px;width:8px;height:8px;border-radius:50%;background:#ffa24d"></div>
<div style="left:1139.5px;top:1263.9px;width:8px;height:8px;border-radius:50%;background:#ffa24d"></div>
<div style="left:1139.5px;top:1275.9px;width:8px;height:8px;border-radius:50%;background:#ffa24d"></div>
<div style="left:1139.5px;top:1287.8px;width:8px;height:8px;border-radius:50%;background:#ffa24d"></div>
<div style="left:1139.5px;top:1299.8px;width:8px;height:8px;border-radius:50%;background:#ffa24d"></div>
<div style="left:1139.5px;top:1311.8px;width:8px;height:8px;border-radius:50%;background:#ffa24d"></div>
<div style="left:1139.5px;top:1323.8px;width:8px;height:8px;border-radius:50%;background:#ffa24d"></div>
<div style="left:1139.5px;top:1335.8px;width:8px;height:8px;border-radius:50%;background:#ffa24d"></div>
<div style="left:1139.5px;top:1347.7px;width:8px;height:8px;border-radius:50%;background:#ffa24d"></div>
<div style="left:1139.5px;top:1359.7px;width:8px;height:8px;border-radius:50%;background:#ffa24d"></div>
<div style="left:1139.5px;top:1371.7px;width:8px;height:8px;border-radius:50%;background:#ffa24d"></div>
<div style="left:1139.5px;top:1180.0px;width:8px;height:8px;border-radius:50%;background:#1b1b1b"></div>
<div style="left:1139.5px;top:1168.0px;width:8px;height:8px;border-radius:50%;background:#1b1b1b"></div>
<div style="left:1139.5px;top:1156.1px;width:8px;height:8px;border-radius:50%;background:#1b1b1b"></div>
<div style="left:1139.5px;top:1144.1px;width:8px;height:8px;border-radius:50%;background:#1b1b1b"></div>
<div style="left:1139.5px;top:1383.7px;width:8px;height:8px;border-radius:50%;background:#8c9fae"></div>
<div style="left:1919.00px;top:1036.00px;width:25.00px;height:451.00px;background:#262626;"></div>
<div style="left:1926.0px;top:1192.0px;width:8px;height:8px;border-radius:50%;background:#ffa24d"></div>
<div style="left:1926.0px;top:1204.0px;width:8px;height:8px;border-radius:50%;background:#ffa24d"></div>
<div style="left:1926.0px;top:1216.0px;width:8px;height:8px;border-radius:50%;background:#ffa24d"></div>
<div style="left:1926.0px;top:1227.9px;width:8px;height:8px;border-radius:50%;background:#ffa24d"></div>
<div style="left:1926.0px;top:1239.9px;width:8px;height:8px;border-radius:50%;background:#ffa24d"></div>
<div style="left:1926.0px;top:1251.9px;width:8px;height:8px;border-radius:50%;background:#ffa24d"></div>
<div style="left:1926.0px;top:1263.9px;width:8px;height:8px;border-radius:50%;background:#ffa24d"></div>
<div style="left:1926.0px;top:1275.9px;width:8px;height:8px;border-radius:50%;background:#ffa24d"></div>
<div style="left:1926.0px;top:1287.8px;width:8px;height:8px;border-radius:50%;background:#ffa24d"></div>
<div style="left:1926.0px;top:1299.8px;width:8px;height:8px;border-radius:50%;background:#ffa24d"></div>
<div style="left:1926.0px;top:1311.8px;width:8px;height:8px;border-radius:50%;background:#ffa24d"></div>
<div style="left:1926.0px;top:1323.8px;width:8px;height:8px;border-radius:50%;background:#ffa24d"></div>
<div style="left:1926.0px;top:1335.8px;width:8px;height:8px;border-radius:50%;background:#ffa24d"></div>
<div style="left:1926.0px;top:1347.7px;width:8px;height:8px;border-radius:50%;background:#ffa24d"></div>
<div style="left:1926.0px;top:1359.7px;width:8px;height:8px;border-radius:50%;background:#ffa24d"></div>
<div style="left:1926.0px;top:1371.7px;width:8px;height:8px;border-radius:50%;background:#ffa24d"></div>
<div style="left:1926.0px;top:1180.0px;width:8px;height:8px;border-radius:50%;background:#1b1b1b"></div>
<div style="left:1926.0px;top:1168.0px;width:8px;height:8px;border-radius:50%;background:#1b1b1b"></div>
<div style="left:1926.0px;top:1156.1px;width:8px;height:8px;border-radius:50%;background:#1b1b1b"></div>
<div style="left:1926.0px;top:1144.1px;width:8px;height:8px;border-radius:50%;background:#1b1b1b"></div>
<div style="left:1926.0px;top:1383.7px;width:8px;height:8px;border-radius:50%;background:#8c9fae"></div>
<div style="left:808.00px;top:1036.00px;width:323.50px;height:41.00px;background:#3b3b3b;"></div>
<div style="left:808.00px;top:1077.00px;width:323.50px;height:410.00px;background:#2f2f2f;"></div>
<div style="left:816.5px;top:1042.5px;width:25px;height:25px;border-radius:50%;background:#ffa24d;border:1.5px solid #2a1a10"></div>
<div class="t" style="left:857.60px;top:1046.70px;font-size:23px;color:#c6c6c6;font-weight:normal;letter-spacing:2px;-webkit-text-stroke:0.8px #c6c6c6;">Not...</div>
<div class="t" style="left:932.00px;top:1046.70px;font-size:23px;color:#bcbcbc;font-weight:normal;letter-spacing:0.8px;-webkit-text-stroke:0.45px #bcbcbc;">MPE</div>
<svg style="left:988.5px;top:1045px" width="24" height="24"><rect x="0.5" y="3.5" width="21.5" height="16" rx="2" fill="#858585"/><rect x="3.5" y="11" width="15.5" height="6" fill="#3a3a3a"/><rect x="5" y="1" width="2.5" height="3" fill="#858585"/><rect x="15" y="1" width="2.5" height="3" fill="#858585"/><rect x="5" y="19" width="2.5" height="3" fill="#858585"/><rect x="15" y="19" width="2.5" height="3" fill="#858585"/></svg>
<div style="left:1017.2px;top:1041.5px;width:30px;height:30px;border-radius:50%;background:#1c1c1c"></div>
<div style="left:1055.7px;top:1041.5px;width:30px;height:30px;border-radius:50%;background:#1c1c1c"></div>
<div style="left:1094.2px;top:1041.5px;width:30px;height:30px;border-radius:50%;background:#1c1c1c"></div>
<svg style="left:1017.2px;top:1041.5px" width="30" height="30"><path d="M8.5,16.5 A7,7 0 0 1 19,8.8" fill="none" stroke="#c0c0c0" stroke-width="2.3"/><polygon points="5.5,14.5 12.5,14.5 9,20" fill="#c0c0c0"/><path d="M21.5,13.5 A7,7 0 0 1 11,21.2" fill="none" stroke="#c0c0c0" stroke-width="2.3"/><polygon points="24.5,15.5 17.5,15.5 21,10" fill="#c0c0c0"/></svg>
<svg style="left:1055.7px;top:1041.5px" width="30" height="30"><path d="M7,7.3 H19.5 L23.5,11.3 V23.5 H7 Z" fill="#c4c4c4"/><rect x="10.3" y="9" width="7.5" height="5" fill="#1c1c1c"/></svg>
<svg style="left:1094.2px;top:1041.5px" width="30" height="30"><circle cx="7.7" cy="15.5" r="2.4" fill="#c4c4c4"/><circle cx="15" cy="15.5" r="2.4" fill="#c4c4c4"/><circle cx="22.3" cy="15.5" r="2.4" fill="#c4c4c4"/></svg>
<div class="t" style="left:963.50px;top:1098.30px;font-size:27px;color:#ffa24d;font-weight:bold;transform:translateX(-50%);">Note Limiter</div>
<div class="t" style="left:963.50px;top:1158.30px;font-size:21px;color:#b5b5b5;font-weight:normal;letter-spacing:0.8px;-webkit-text-stroke:0.45px #b5b5b5;transform:translateX(-50%);">Max Voices</div>
<div class="t" style="left:963.50px;top:1245.00px;font-size:21px;color:#c4c4c4;font-weight:normal;-webkit-text-stroke:0.45px #c4c4c4;transform:translateX(-50%);">3</div>
<div class="t" style="left:963.50px;top:1283.00px;font-size:21px;color:#b5b5b5;font-weight:normal;letter-spacing:1.2px;-webkit-text-stroke:0.45px #b5b5b5;transform:translateX(-50%);">Min Time</div>
<div class="t" style="left:963.50px;top:1369.00px;font-size:21px;color:#c4c4c4;font-weight:normal;letter-spacing:1.0px;-webkit-text-stroke:0.45px #c4c4c4;transform:translateX(-50%);">0.00 ms</div>
<svg style="left:0;top:0" width="1944" height="1494"><path d="M948.13,1240.59 A29,29 0 1 1 978.87,1240.59" fill="none" stroke="#161616" stroke-width="4.6"/><path d="M948.13,1240.59 A29,29 0 0 1 937.01,1227.80" fill="none" stroke="#90a8b8" stroke-width="4.6"/><line x1="963.50" y1="1216.00" x2="934.66" y2="1225.93" stroke="#161616" stroke-width="4.6"/></svg>
<svg style="left:0;top:0" width="1944" height="1494"><path d="M948.13,1364.09 A29,29 0 1 1 978.87,1364.09" fill="none" stroke="#161616" stroke-width="4.6"/><line x1="963.50" y1="1339.50" x2="947.34" y2="1365.37" stroke="#161616" stroke-width="4.6"/></svg>
<div style="left:912px;top:1419.3px;width:102.5px;height:37.2px;background:#1c1c1c;border-radius:19px"></div>
<div class="t" style="left:963.50px;top:1427.70px;font-size:22px;color:#cfcfcf;font-weight:normal;letter-spacing:0.3px;-webkit-text-stroke:0.45px #cfcfcf;transform:translateX(-50%);">Help</div>
</body></html>
